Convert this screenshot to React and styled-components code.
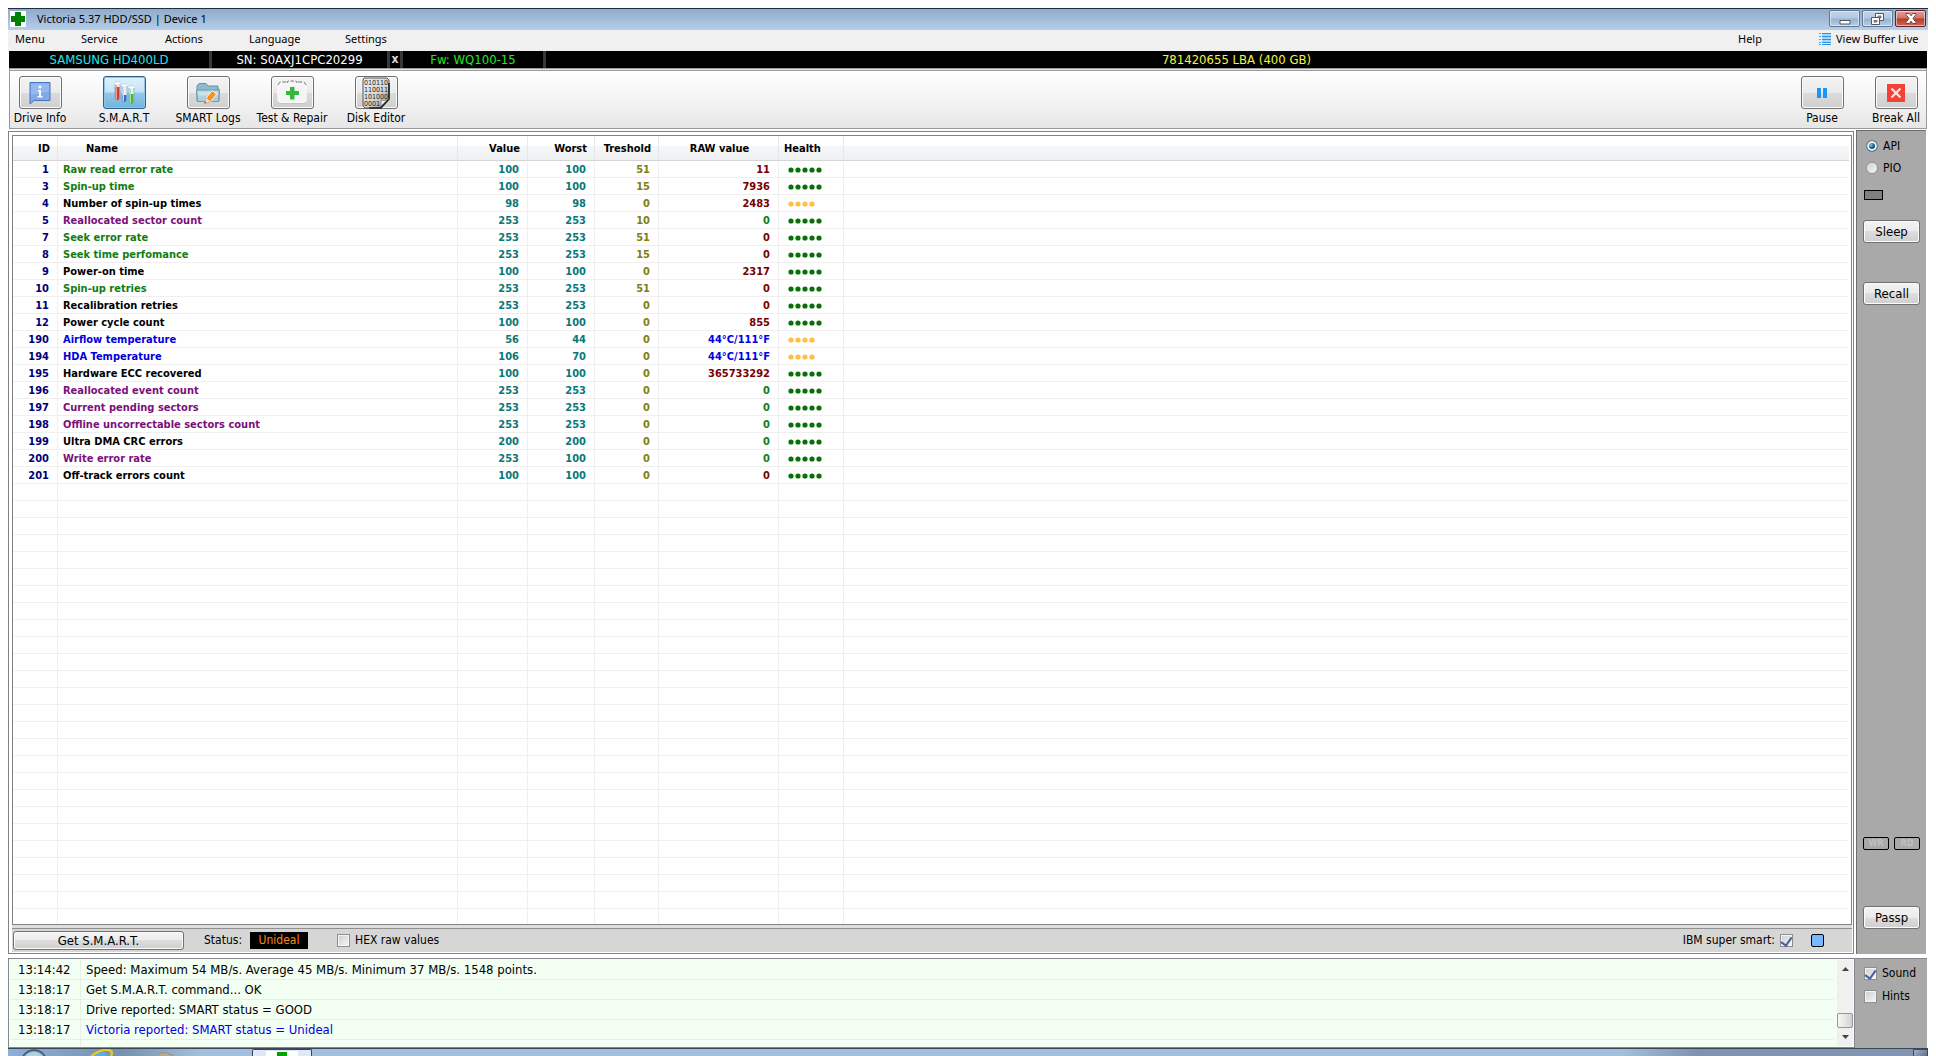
import React, {useState} from 'react';
import styled, {createGlobalStyle} from 'styled-components';

const BLACK = '#000';
const GREEN = '#117d11';
const PURPLE = '#7b0f7b';
const BLUE = '#0000e0';
const MAROON = '#780000';

const columns = [
    {title: 'ID', width: 45, align: 'right'},
    {title: 'Name', width: 400, align: 'left', indent: 28},
    {title: 'Value', width: 70, align: 'right'},
    {title: 'Worst', width: 67, align: 'right'},
    {title: 'Treshold', width: 64, align: 'right'},
    {title: 'RAW value', width: 120, align: 'center', indent: 9},
    {title: 'Health', width: 65, align: 'left', indent: 5},
];

const attributes = [
    [1, 'Raw read error rate', GREEN, 100, 100, 51, '11', MAROON, 5],
    [3, 'Spin-up time', GREEN, 100, 100, 15, '7936', MAROON, 5],
    [4, 'Number of spin-up times', BLACK, 98, 98, 0, '2483', MAROON, 4],
    [5, 'Reallocated sector count', PURPLE, 253, 253, 10, '0', GREEN, 5],
    [7, 'Seek error rate', GREEN, 253, 253, 51, '0', MAROON, 5],
    [8, 'Seek time perfomance', GREEN, 253, 253, 15, '0', MAROON, 5],
    [9, 'Power-on time', BLACK, 100, 100, 0, '2317', MAROON, 5],
    [10, 'Spin-up retries', GREEN, 253, 253, 51, '0', MAROON, 5],
    [11, 'Recalibration retries', BLACK, 253, 253, 0, '0', MAROON, 5],
    [12, 'Power cycle count', BLACK, 100, 100, 0, '855', MAROON, 5],
    [190, 'Airflow temperature', BLUE, 56, 44, 0, '44°C/111°F', BLUE, 4],
    [194, 'HDA Temperature', BLUE, 106, 70, 0, '44°C/111°F', BLUE, 4],
    [195, 'Hardware ECC recovered', BLACK, 100, 100, 0, '365733292', MAROON, 5],
    [196, 'Reallocated event count', PURPLE, 253, 253, 0, '0', GREEN, 5],
    [197, 'Current pending sectors', PURPLE, 253, 253, 0, '0', GREEN, 5],
    [198, 'Offline uncorrectable sectors count', PURPLE, 253, 253, 0, '0', GREEN, 5],
    [199, 'Ultra DMA CRC errors', BLACK, 200, 200, 0, '0', GREEN, 5],
    [200, 'Write error rate', PURPLE, 253, 100, 0, '0', GREEN, 5],
    [201, 'Off-track errors count', BLACK, 100, 100, 0, '0', MAROON, 5],
];

const EMPTY_ROWS = 25;

const log = [
    ['13:14:42', 'Speed: Maximum 54 MB/s. Average 45 MB/s. Minimum 37 MB/s. 1548 points.', BLACK],
    ['13:18:17', 'Get S.M.A.R.T. command... OK', BLACK],
    ['13:18:17', 'Drive reported: SMART status = GOOD', BLACK],
    ['13:18:17', 'Victoria reported: SMART status = Unideal', BLUE],
];

const InfoIcon = () => (
    <svg width="24" height="24" viewBox="0 0 24 24">
        <path d="M2 1.5h20v18H6L2 23z" fill="#7fa9ea" stroke="#4a76bd" />
        <path d="M3 2.5h18v8L3 14z" fill="#93b9f1" />
        <circle cx="12" cy="6" r="1.5" fill="#fff" />
        <path d="M10 9h3v6h1.5v1.5h-5V15H11v-4.5h-1z" fill="#fff" />
    </svg>
)

const Tube = ({x, y, level, color, light}) => (
    <g>
        <path d={`M${x} ${y}h5v15a2.5 2.5 0 0 1-5 0z`} fill="#e6f2fb" stroke="#7d9db8" strokeWidth=".7" />
        <path d={`M${x + 0.5} ${y + level}h4v${15 - level}a2 2 0 0 1-4 0z`} fill={color} />
        <path d={`M${x + 1.5} ${y + 2}v14`} stroke={light} strokeWidth="1" />
        <path d={`M${x - 0.5} ${y}h6`} stroke="#fff" strokeWidth="2" />
        <path d={`M${x - 0.5} ${y - 1}h6`} stroke="#9bb4c8" strokeWidth=".5" />
    </g>
)

const TubesIcon = () => (
    <svg width="24" height="26" viewBox="0 0 24 26">
        <Tube x={3} y={3} level={4} color="#d63a32" light="#f29a90" />
        <Tube x={10} y={5} level={10} color="#2a6ed0" light="#c5e0fb" />
        <Tube x={17} y={7} level={7} color="#42b83e" light="#a8e59f" />
    </svg>
)

const FolderIcon = () => (
    <svg width="26" height="24" viewBox="0 0 26 24">
        <path d="M2 20V5l2-2.500h7l2 2.500h10v3h1v12z" fill="#8fbccb" stroke="#5f94a8" />
        <path d="M1.500 9h23l-1 11.500h-21z" fill="#aed0dc" stroke="#6a9db0" />
        <path d="M3 10.500h20l-.3 4H3.500z" fill="#cbe3eb" />
        <path d="M9.500 22.500l1.500-5 4 3.500z" fill="#f8e0bc" stroke="#a98557" strokeWidth=".5" />
        <path d="M11 17.500l6-8 4.500 3.500-6 8z" fill="#f7941d" stroke="#fff" strokeWidth=".8" />
        <path d="M9.500 22.500l.5-1.800 1.200 1z" fill="#444" />
    </svg>
)

const KitIcon = () => (
    <svg width="30" height="28" viewBox="0 0 30 28">
        <path d="M3 5h24a2 2 0 0 1 2 2v15a2 2 0 0 1-2 2H3a2 2 0 0 1-2-2V7a2 2 0 0 1 2-2z" fill="#f4f4f4" stroke="#fff" />
        <path d="M1.500 23v1.500h27V23" fill="none" stroke="#c4c4c4" />
        <path d="M10 4l1-2h8l1 2" fill="none" stroke="#777" strokeDasharray="3 2" />
        <path d="M1 6l2-3h6M21 3h6l2 3" fill="none" stroke="#777" strokeDasharray="4 2" />
        <path d="M13 8h4.500v4H22v4h-4.500v4.500H13V16H9v-4h4z" fill="#34b83c" />
    </svg>
)

const BinaryIcon = () => (
    <svg width="30" height="32" viewBox="0 0 30 32">
        <defs>
            <linearGradient id="page" x1="0" y1="0" x2="1" y2="1">
                <stop offset="0" stopColor="#f2f2f2" />
                <stop offset=".6" stopColor="#d4d4d4" />
                <stop offset="1" stopColor="#777" />
            </linearGradient>
        </defs>
        <path d="M3 1h23l2 2v19l-8 9H4l-2-2V3z" fill="url(#page)" stroke="#555" />
        <path d="M28 6v16l-8 9H8" fill="none" stroke="#222" strokeWidth="1.600" />
        <g fontFamily="'DejaVu Sans Condensed', sans-serif" fontSize="7" fill="#222">
            <text x="3" y="8">010110</text>
            <text x="3" y="15">110011</text>
            <text x="3" y="22">101000</text>
            <text x="3" y="29">0001</text>
        </g>
        <path d="M19 30c2-2 1-5 1-7 3 1 5 1 8-2z" fill="#f5f5f5" stroke="#666" strokeWidth=".6" />
    </svg>
)

const PauseIcon = () => (
    <svg width="10" height="10" viewBox="0 0 10 10">
        <path d="M0 0h4v10H0zM6 0h4v10H6z" fill="#2094f3" />
    </svg>
)

const BreakIcon = () => (
    <svg width="18" height="18" viewBox="0 0 18 18">
        <path d="M0 0h18v18H0z" fill="#f44336" />
        <path d="M4.500 4.500l9 9M13.500 4.500l-9 9" stroke="#fde4e0" strokeWidth="2.200" />
    </svg>
)

const CrossIcon = () => (
    <svg width="16" height="16" viewBox="0 0 16 16">
        <path d="M0 0h16v16H0z" fill="#fff" />
        <path d="M5 1h6v4h4v6h-4v4H5v-4H1V5h4z" fill="#008000" />
    </svg>
)

const ListIcon = () => (
    <svg width="12" height="12" viewBox="0 0 12 12">
        <path d="M0 .5h2M0 3.500h2M0 6.500h2M0 9.500h2M0 11.500h2" stroke="#4ea6ea" />
        <path d="M3 .5h9M3 3.500h9M3 6.500h9M3 9.500h9M3 11.500h9" stroke="#2f93e2" />
        <path d="M3 2h9M3 5h9M3 8h9" stroke="#a9d5f7" strokeWidth="2" />
    </svg>
)

const MinimizeIcon = () => (
    <svg width="12" height="12" viewBox="0 0 12 12">
        <path d="M1 7.500h10v3.500H1z" fill="#fff" stroke="#535666" />
    </svg>
)

const RestoreIcon = () => (
    <svg width="13" height="12" viewBox="0 0 13 12">
        <path d="M4.500 .5h8v7h-8z" fill="#fff" stroke="#535666" />
        <path d="M7 3h3v2H7z" fill="#9fb6d1" stroke="#535666" strokeWidth=".8" />
        <path d="M.5 4.500h8v7h-8z" fill="#fff" stroke="#535666" />
        <path d="M3 7.500h3v1.500H3z" fill="#9fb6d1" stroke="#535666" strokeWidth=".8" />
    </svg>
)

const CloseIcon = () => (
    <svg width="12" height="11" viewBox="0 0 12 11">
        <path d="M1 .5h3.200L6 2.800 7.800.5H11v1L8 5.500l3 3.800v1.200H7.800L6 8.200l-1.800 2.300H1V9.300l3-3.800-3-4z" fill="#fff" stroke="#5a3b45" strokeWidth=".9" />
    </svg>
)

const ArrowIcon = ({down}) => (
    <svg width="7" height="4" viewBox="0 0 7 4">
        <path d={down ? 'M0 0h7L3.500 4z' : 'M0 4h7L3.500 0z'} fill="#444" />
    </svg>
)

const OrbIcon = () => (
    <svg width="26" height="8" viewBox="0 0 26 8">
        <ellipse cx="13" cy="12" rx="12" ry="11" fill="#7fa6c4" stroke="#3d5670" strokeWidth="1.500" />
        <ellipse cx="13" cy="10" rx="9" ry="7" fill="#b5d0e2" />
    </svg>
)

const BrowserIcon = () => (
    <svg width="26" height="8" viewBox="0 0 26 8">
        <ellipse cx="12" cy="13" rx="9" ry="10" fill="#5aaee6" />
        <path d="M2 8C7 2 18-1 22 2c1 1 1 3 0 5" fill="none" stroke="#e9c62c" strokeWidth="2.500" />
    </svg>
)

const ExplorerIcon = () => (
    <svg width="24" height="8" viewBox="0 0 24 8">
        <path d="M1 8V6l2-2h8l2 2h3v2z" fill="#b9a98a" stroke="#97937f" />
    </svg>
)

const TaskCrossIcon = () => (
    <svg width="32" height="6" viewBox="0 0 32 6">
        <path d="M0 0h32v6H0z" fill="#fff" />
        <path d="M11 1h10v5H11z" fill="#00a000" />
    </svg>
)

const HealthDots = ({count}) => (
    <svg width="35" height="6" viewBox="0 0 35 6" role="img" aria-label={`${count} of 5`}>
        {Array.from({length: count}, (_, i) => (
            <circle key={i} cx={3 + i * 7} cy="3" r="2.600" fill={count === 5 ? '#087008' : '#ffbe46'} />
        ))}
    </svg>
)

const CaptionButton = ({label, close, children}) => (
    <Caption type="button" aria-label={label} $close={close}>{children}</Caption>
)

const ToolItem = ({icon, label, active}) => (
    <Tool>
        <ToolButton type="button" aria-label={label} $active={active}>{icon}</ToolButton>
        <ToolLabel>{label}</ToolLabel>
    </Tool>
)

const CheckField = ({id, label, checked, reverse}) => {
    const [on, setOn] = useState(checked);

    return (
        <Field $reverse={reverse}>
            <Check id={id} type="checkbox" checked={on} onChange={() => setOn(prev => !prev)} />
            <label htmlFor={id}>{label}</label>
        </Field>
    )
}

const SmartTable = () => (
    <Table>
        <colgroup>
            {columns.map(col => <Col key={col.title} $width={col.width} />)}
            <col />
        </colgroup>
        <thead>
            <tr>
                {columns.map(col => (
                    <Head key={col.title} $align={col.align} $indent={col.indent}>{col.title}</Head>
                ))}
                <Head />
            </tr>
        </thead>
        <tbody>
            {attributes.map(([id, name, color, value, worst, treshold, raw, rawColor, health]) => (
                <tr key={id}>
                    <Cell $color="#000078" $right>{id}</Cell>
                    <Cell $color={color}>{name}</Cell>
                    <Cell $color="#087878" $right>{value}</Cell>
                    <Cell $color="#087878" $right>{worst}</Cell>
                    <Cell $color="#808010" $right>{treshold}</Cell>
                    <Cell $color={rawColor} $right>{raw}</Cell>
                    <HealthCell><HealthDots count={health} /></HealthCell>
                    <Cell />
                </tr>
            ))}
            {Array.from({length: EMPTY_ROWS}, (_, row) => (
                <tr key={row}>
                    {Array.from({length: columns.length + 1}, (_, i) => <Cell key={i} />)}
                </tr>
            ))}
            <tr>
                {Array.from({length: columns.length + 1}, (_, i) => <LastCell key={i} />)}
            </tr>
        </tbody>
    </Table>
)

const App = () => {
    const [mode, setMode] = useState('API');

    return (
        <>
            <GlobalStyle />
            <Page>
                <TitleBar>
                    <CrossIcon />
                    <Title>Victoria 5.37 HDD/SSD | Device 1</Title>
                    <CaptionButton label="Minimize"><MinimizeIcon /></CaptionButton>
                    <CaptionButton label="Restore"><RestoreIcon /></CaptionButton>
                    <CaptionButton label="Close" close><CloseIcon /></CaptionButton>
                </TitleBar>
                <MenuBar>
                    <MenuItem type="button" $width={66}>Menu</MenuItem>
                    <MenuItem type="button" $width={84}>Service</MenuItem>
                    <MenuItem type="button" $width={84}>Actions</MenuItem>
                    <MenuItem type="button" $width={96}>Language</MenuItem>
                    <MenuItem type="button" $width={84}>Settings</MenuItem>
                    <Spacer />
                    <MenuItem type="button" $width={81}>Help</MenuItem>
                    <MenuItem type="button" $width={109}><ListIcon />View Buffer Live</MenuItem>
                </MenuBar>
                <DriveBar>
                    <DriveCell $width={203} $color="#20e8e8">SAMSUNG HD400LD</DriveCell>
                    <DriveCell $width={178} $color="#fff">SN: S0AXJ1CPC20299</DriveCell>
                    <DriveClose type="button">x</DriveClose>
                    <DriveCell $width={143} $color="#20e820">Fw: WQ100-15</DriveCell>
                    <DriveCell $color="#f4f440">781420655 LBA (400 GB)</DriveCell>
                </DriveBar>
                <ToolBar>
                    <ToolGroup $gap={24}>
                        <ToolItem icon={<InfoIcon />} label="Drive Info" />
                        <ToolItem icon={<TubesIcon />} label="S.M.A.R.T" active />
                        <ToolItem icon={<FolderIcon />} label="SMART Logs" />
                        <ToolItem icon={<KitIcon />} label="Test & Repair" />
                        <ToolItem icon={<BinaryIcon />} label="Disk Editor" />
                    </ToolGroup>
                    <ToolGroup $gap={14}>
                        <ToolItem icon={<PauseIcon />} label="Pause" />
                        <ToolItem icon={<BreakIcon />} label="Break All" />
                    </ToolGroup>
                </ToolBar>
                <Workspace>
                    <SmartPanel>
                        <TableFrame>
                            <SmartTable />
                        </TableFrame>
                        <StatusBar>
                            <GetButton type="button">Get S.M.A.R.T.</GetButton>
                            <StatusLabel>Status:</StatusLabel>
                            <StatusValue>Unideal</StatusValue>
                            <CheckField id="hex" label="HEX raw values" checked={false} />
                            <Spacer />
                            <CheckField id="ibm" label="IBM super smart:" checked reverse />
                            <BlueLamp />
                        </StatusBar>
                    </SmartPanel>
                    <SidePanel>
                        <RadioList>
                            {['API', 'PIO'].map(name => (
                                <Field key={name}>
                                    <Radio
                                        id={name}
                                        type="radio"
                                        name="mode"
                                        checked={mode === name}
                                        onChange={() => setMode(name)}
                                    />
                                    <label htmlFor={name}>{name}</label>
                                </Field>
                            ))}
                        </RadioList>
                        <GrayLamp />
                        <SideButton type="button" $top={20}>Sleep</SideButton>
                        <SideButton type="button" $top={39}>Recall</SideButton>
                        <Spacer />
                        <LampRow>
                            <Lamp>WR</Lamp>
                            <Lamp>RD</Lamp>
                        </LampRow>
                        <SideButton type="button" $top={56}>Passp</SideButton>
                    </SidePanel>
                </Workspace>
                <LogArea>
                    <LogPanel>
                        <LogTable>
                            <tbody>
                                {log.map(([time, text, color], i) => (
                                    <tr key={i}>
                                        <LogTime>{time}</LogTime>
                                        <LogText $color={color}>{text}</LogText>
                                    </tr>
                                ))}
                                <tr>
                                    <LogTime $last />
                                    <LogText $last />
                                </tr>
                            </tbody>
                        </LogTable>
                        <ScrollBar>
                            <ScrollArrow type="button" aria-label="Scroll up"><ArrowIcon /></ScrollArrow>
                            <Spacer />
                            <ScrollThumb />
                            <ScrollArrow type="button" aria-label="Scroll down"><ArrowIcon down /></ScrollArrow>
                        </ScrollBar>
                    </LogPanel>
                    <LogSide>
                        <CheckField id="sound" label="Sound" checked />
                        <CheckField id="hints" label="Hints" checked={false} />
                    </LogSide>
                </LogArea>
                <TaskBar>
                    <OrbIcon />
                    <BrowserIcon />
                    <ExplorerIcon />
                    <TaskButton type="button" aria-label="Victoria"><TaskCrossIcon /></TaskButton>
                    <Spacer />
                    <ShowDesktop type="button" aria-label="Show desktop" />
                </TaskBar>
            </Page>
        </>
    )
}

const GlobalStyle = createGlobalStyle`
    * {
        box-sizing: border-box;
    }

    body {
        margin: 0;
        background: #fff;
        color: #000;
        font: 12px 'DejaVu Sans Condensed', 'DejaVu Sans', sans-serif;
    }

    button, input {
        margin: 0;
        padding: 0;
        font: inherit;
        color: inherit;
    }

    svg {
        display: block;
        flex: none;
    }
`

const Page = styled.div`
    display: flex;
    flex-direction: column;
    min-height: 100vh;
    padding: 8px 8px 0;
`

const Spacer = styled.div`
    flex: 1;
`

const TitleBar = styled.header`
    display: flex;
    align-items: center;
    gap: 2px;
    height: 22px;
    padding: 0 2px 2px;
    border-top: 1px solid #1c2f42;
    background: linear-gradient(#93abc8, #9db8d8 40%, #b6cfea);
`

const Title = styled.h1`
    flex: 1;
    margin: 0 0 0 9px;
    font: 11px 'Noto Sans', 'Open Sans', sans-serif;
`

const Caption = styled.button`
    display: flex;
    align-items: center;
    justify-content: center;
    width: 31px;
    height: 17px;
    border: 1px solid ${p => p.$close ? '#5b2430' : '#5f7690'};
    border-radius: 2px;
    box-shadow: inset 0 0 0 1px rgba(255, 255, 255, 0.5);
    background: ${p => p.$close
        ? 'linear-gradient(#e0a198, #cf7468 48%, #b93a26 52%, #cf6a50)'
        : 'linear-gradient(#c3d4e8, #b4c9e2 48%, #98b2d0 52%, #b4cce6)'};
`

const MenuBar = styled.nav`
    display: flex;
    height: 21px;
    padding-left: 7px;
    background: #f0f0f0;
`

const MenuItem = styled.button`
    display: flex;
    align-items: center;
    gap: 5px;
    width: ${p => p.$width}px;
    height: 17px;
    border: 0;
    background: none;
    font: 11px 'Noto Sans', 'Open Sans', sans-serif;
    white-space: nowrap;
`

const DriveBar = styled.div`
    display: flex;
    height: 17px;
    margin: 0 1px;
    background: #000;
    font-size: 13px;
    line-height: 17px;
    text-align: center;
`

const DriveCell = styled.div`
    flex: ${p => p.$width ? 'none' : 1};
    width: ${p => p.$width ? `${p.$width}px` : 'auto'};
    border-right: ${p => p.$width ? '3px solid #383838' : 0};
    color: ${p => p.$color};
`

const DriveClose = styled.button`
    width: 13px;
    border: 0;
    border-right: 3px solid #383838;
    background: #000;
    color: #d8d8e8;
    font-size: 12px;
    font-weight: 700;
    line-height: 17px;
`

const ToolBar = styled.div`
    display: flex;
    justify-content: space-between;
    height: 61px;
    margin: 0 1px;
    padding-top: 5px;
    border: 1px solid #999;
    border-top: 3px double #999;
    background: linear-gradient(#fff, #f4f4f4 50%, #e6e6e6);
`

const ToolGroup = styled.div`
    display: flex;
    gap: ${p => p.$gap}px;
`

const Tool = styled.div`
    display: flex;
    flex-direction: column;
    align-items: center;
    width: 60px;
`

const ToolButton = styled.button`
    display: flex;
    align-items: center;
    justify-content: center;
    width: 43px;
    height: 33px;
    border: 1px solid ${p => p.$active ? '#2c628b' : '#707070'};
    border-radius: 3px;
    box-shadow: inset 0 0 0 1px ${p => p.$active ? '#8fc4e4' : '#fbfbfb'};
    background: ${p => p.$active
        ? 'linear-gradient(#e0f1fb, #c5e3f6 48%, #93c9ea 52%, #6fb3dd)'
        : 'linear-gradient(#f3f3f3, #ebebeb 50%, #dbdbdb 50%, #cfcfcf)'};
`

const ToolLabel = styled.span`
    margin-top: 1px;
    line-height: 16px;
    white-space: nowrap;
`

const Workspace = styled.main`
    display: flex;
    flex: 1;
    gap: 2px;
    padding: 1px 2px 0 0;
`

const SmartPanel = styled.section`
    display: flex;
    flex: 1;
    flex-direction: column;
    min-width: 0;
    margin-top: 1px;
    padding: 3px 1px 1px 3px;
    border: 1px solid #828282;
    background: #fff;
`

const TableFrame = styled.div`
    flex: 1;
    padding-right: 2px;
    border: 1px solid #828282;
`

const Table = styled.table`
    width: 100%;
    table-layout: fixed;
    border-spacing: 0;
    font-size: 11px;
    font-weight: 700;
`

const Col = styled.col`
    width: ${p => p.$width}px;
`

const Head = styled.th`
    height: 25px;
    padding: 1px 7px 0 ${p => p.$indent || 5}px;
    border-right: 1px solid #e6e8ea;
    border-bottom: 1px solid #d5d5d5;
    background: linear-gradient(#fff 42%, #f5f6f7 42%, #f0f1f3);
    text-align: ${p => p.$align};

    &:last-child {
        border-right: 0;
    }
`

const Cell = styled.td`
    height: 17px;
    padding: 2px ${p => p.$right ? 8 : 5}px 0;
    border-right: 1px solid #efefef;
    border-bottom: 1px solid #efefef;
    color: ${p => p.$color};
    line-height: 14px;
    text-align: ${p => p.$right ? 'right' : 'left'};
    white-space: nowrap;

    &:last-child {
        border-right: 0;
    }
`

const HealthCell = styled(Cell)`
    padding-left: 9px;
`

const LastCell = styled(Cell)`
    height: 15px;
    border-bottom: 0;
`

const StatusBar = styled.footer`
    display: flex;
    align-items: center;
    height: 27px;
    padding: 0 28px 0 1px;
    border-top: 3px solid #dedede;
    box-shadow: inset 0 1px #909090;
    background: #d6d6d6;
`

const PushButton = styled.button`
    border: 1px solid #707070;
    border-radius: 3px;
    box-shadow: inset 0 0 0 1px #fbfbfb;
    background: linear-gradient(#f3f3f3, #ebebeb 50%, #dddddd 50%, #cfcfcf);
    font-size: 13px;
`

const GetButton = styled(PushButton)`
    width: 171px;
    height: 19px;
    line-height: 15px;
`

const StatusLabel = styled.span`
    margin: 0 8px 0 20px;
`

const StatusValue = styled.output`
    width: 58px;
    margin-right: 29px;
    background: #000;
    color: #ff8614;
    line-height: 17px;
    text-align: center;
`

const Field = styled.div`
    display: flex;
    flex-direction: ${p => p.$reverse ? 'row-reverse' : 'row'};
    align-items: center;
    gap: 5px;
    line-height: 16px;
`

const Check = styled.input`
    appearance: none;
    display: flex;
    justify-content: center;
    width: 13px;
    height: 13px;
    border: 1px solid #8e8f8f;
    box-shadow: inset 0 0 0 1px #f4f4f4;
    background: linear-gradient(135deg, #cbcfd5, #f6f6f6);

    &:checked::after {
        content: '';
        width: 5px;
        height: 9px;
        border: solid #4a5f97;
        border-width: 0 2px 2px 0;
        transform: rotate(35deg);
    }
`

const Radio = styled.input`
    appearance: none;
    width: 12px;
    height: 12px;
    border: 1px solid #8e8f8f;
    border-radius: 50%;
    box-shadow: inset 0 0 0 1px #f4f4f4;
    background: linear-gradient(135deg, #cbcfd5, #f6f6f6);

    &:checked {
        border-color: #5f7f95;
        box-shadow: inset 0 0 0 2px #eef6fa;
        background: radial-gradient(circle at 40% 40%, #7fd0ee, #1a5a80 35%, #0b2f47);
    }
`

const BlueLamp = styled.span`
    width: 13px;
    height: 13px;
    margin-left: 18px;
    border: 1px solid #000;
    border-radius: 2px;
    background: #78b8ff;
`

const SidePanel = styled.aside`
    display: flex;
    flex-direction: column;
    width: 70px;
    padding: 7px 6px 25px;
    border-top: 1px solid #6e6e6e;
    border-left: 1px solid #6e6e6e;
    background: #a9a9a9;
`

const RadioList = styled.div`
    display: flex;
    flex-direction: column;
    gap: 6px;
    padding-left: 3px;
`

const GrayLamp = styled.span`
    width: 19px;
    height: 10px;
    margin: 14px 0 0 1px;
    border: 1px solid #000;
    background: #808080;
`

const SideButton = styled(PushButton)`
    width: 57px;
    height: 23px;
    margin-top: ${p => p.$top}px;
`

const LampRow = styled.div`
    display: flex;
    gap: 5px;
`

const Lamp = styled.span`
    width: 27px;
    border: 1px solid #000;
    border-radius: 2px;
    color: #c0c0c0;
    font-size: 9px;
    font-weight: 700;
    line-height: 11px;
    text-align: center;
`

const LogArea = styled.section`
    display: flex;
    height: 90px;
    margin: 4px 1px 0 0;
`

const LogPanel = styled.div`
    display: flex;
    flex: 1;
    padding: 1px;
    border: 1px solid #828790;
    background: #f2fff2;
`

const LogTable = styled.table`
    flex: 1;
    align-self: flex-start;
    margin-right: 3px;
    border-spacing: 0;
    font-size: 13px;
`

const LogTime = styled.td`
    width: 71px;
    height: ${p => p.$last ? 6 : 20}px;
    padding: 0 0 0 8px;
    border-right: 1px solid #e6eee6;
    border-bottom: ${p => p.$last ? 0 : '1px solid #e6f0e6'};
    line-height: 18px;
`

const LogText = styled(LogTime)`
    width: auto;
    padding-left: 5px;
    border-right: 0;
    color: ${p => p.$color};
`

const ScrollBar = styled.div`
    display: flex;
    flex-direction: column;
    width: 16px;
    background: #f0f0f0;
`

const ScrollArrow = styled.button`
    display: flex;
    align-items: center;
    justify-content: center;
    height: 18px;
    border: 0;
    background: none;
`

const ScrollThumb = styled.div`
    height: 15px;
    border: 1px solid #979797;
    border-radius: 2px;
    background: linear-gradient(90deg, #f5f5f5, #e6e6e6 50%, #cfcfcf);
`

const LogSide = styled.aside`
    display: flex;
    flex-direction: column;
    gap: 7px;
    width: 72px;
    padding: 6px 9px;
    border-top: 1px solid #828790;
    background: #a9a9a9;
`

const TaskBar = styled.footer`
    display: flex;
    align-items: flex-start;
    gap: 42px;
    height: 8px;
    padding-left: 13px;
    border-top: 1px solid #3b4756;
    background: linear-gradient(90deg, #8fb0d8, #7690ad 6%, #a3bfdd 10%, #a3bfdd 84%, #7f93af 88%, #8296b2);
`

const TaskButton = styled.button`
    display: flex;
    justify-content: center;
    width: 60px;
    height: 7px;
    margin-left: 29px;
    padding-top: 1px;
    border: 1px solid #35465a;
    border-bottom: 0;
    border-radius: 2px 2px 0 0;
    background: #dfe9f5;
`

const ShowDesktop = styled.button`
    width: 15px;
    height: 7px;
    border: 1px solid #3c4a5c;
    border-bottom: 0;
    background: linear-gradient(135deg, #9fb0c6, #61738c);
`

export default App;
